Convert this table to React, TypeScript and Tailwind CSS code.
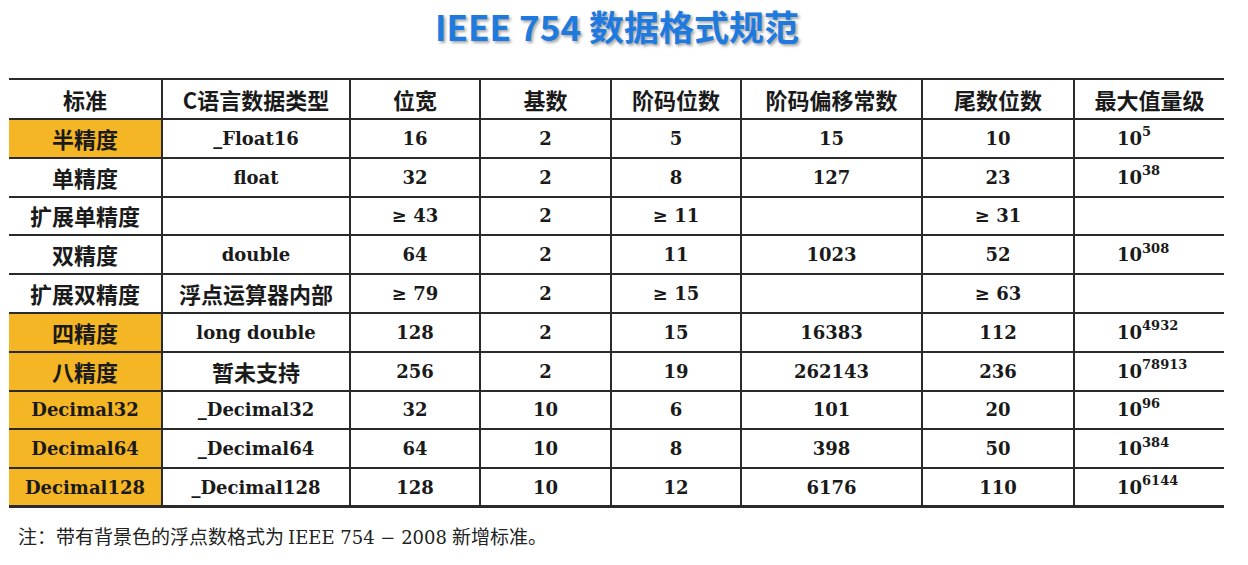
import React from "react";

const CJK = "font-['Noto_Sans_CJK_SC',sans-serif]";
const SERIF = "font-['DejaVu_Serif','Noto_Sans_CJK_SC',serif]";

type Cell = { t: React.ReactNode; cjk?: boolean };

type Row = {
  name: string;
  nameCjk: boolean;
  hl: boolean;
  cells: Cell[];
  maxExp?: string;
};

const rows: Row[] = [
  { name: "半精度", nameCjk: true, hl: true, cells: [{ t: "_Float16" }, { t: "16" }, { t: "2" }, { t: "5" }, { t: "15" }, { t: "10" }], maxExp: "5" },
  { name: "单精度", nameCjk: true, hl: false, cells: [{ t: "float" }, { t: "32" }, { t: "2" }, { t: "8" }, { t: "127" }, { t: "23" }], maxExp: "38" },
  { name: "扩展单精度", nameCjk: true, hl: false, cells: [{ t: "" }, { t: "≥ 43" }, { t: "2" }, { t: "≥ 11" }, { t: "" }, { t: "≥ 31" }] },
  { name: "双精度", nameCjk: true, hl: false, cells: [{ t: "double" }, { t: "64" }, { t: "2" }, { t: "11" }, { t: "1023" }, { t: "52" }], maxExp: "308" },
  { name: "扩展双精度", nameCjk: true, hl: false, cells: [{ t: "浮点运算器内部", cjk: true }, { t: "≥ 79" }, { t: "2" }, { t: "≥ 15" }, { t: "" }, { t: "≥ 63" }] },
  { name: "四精度", nameCjk: true, hl: true, cells: [{ t: "long double" }, { t: "128" }, { t: "2" }, { t: "15" }, { t: "16383" }, { t: "112" }], maxExp: "4932" },
  { name: "八精度", nameCjk: true, hl: true, cells: [{ t: "暂未支持", cjk: true }, { t: "256" }, { t: "2" }, { t: "19" }, { t: "262143" }, { t: "236" }], maxExp: "78913" },
  { name: "Decimal32", nameCjk: false, hl: true, cells: [{ t: "_Decimal32" }, { t: "32" }, { t: "10" }, { t: "6" }, { t: "101" }, { t: "20" }], maxExp: "96" },
  { name: "Decimal64", nameCjk: false, hl: true, cells: [{ t: "_Decimal64" }, { t: "64" }, { t: "10" }, { t: "8" }, { t: "398" }, { t: "50" }], maxExp: "384" },
  { name: "Decimal128", nameCjk: false, hl: true, cells: [{ t: "_Decimal128" }, { t: "128" }, { t: "10" }, { t: "12" }, { t: "6176" }, { t: "110" }], maxExp: "6144" },
];

const headers = ["标准", "C语言数据类型", "位宽", "基数", "阶码位数", "阶码偏移常数", "尾数位数", "最大值量级"];

export default function App() {
  return (
    <div className="w-[1248px] h-[565px] bg-white overflow-hidden text-[#1a1a1a]">
      <div className="h-[52px] flex items-start justify-center pr-[14px]">
        <h1
          className={`${CJK} text-[35px] font-bold text-[#1f7ae0] leading-[52px]`}
          style={{ textShadow: "2px 2px 3px rgba(0,0,0,0.35)" }}
        >
          IEEE 754 数据格式规范
        </h1>
      </div>
      <div className="ml-[9px] mt-[26px] w-[1215px] border-t-2 border-[#2a2a2a]">
        <div className="grid grid-cols-[152px_188px_130px_131px_130px_181px_152px_151px]">
          {headers.map((h, i) => (
            <div
              key={h}
              className={`h-[40px] flex items-center justify-center border-b-2 border-[#2a2a2a] ${i > 0 ? "border-l-2" : ""} ${CJK} font-bold text-[22px]`}
            >
              {h}
            </div>
          ))}
          {rows.map((r, ri) => (
            <React.Fragment key={r.name}>
              <div
                className={`h-[38.8px] flex items-center justify-center border-b-2 border-[#2a2a2a] ${r.hl ? "bg-[#f5b625]" : ""} ${r.nameCjk ? `${CJK} text-[22px]` : `${SERIF} text-[18px]`} font-bold ${ri === rows.length - 1 ? "border-b-[3px]" : ""}`}
              >
                {r.name}
              </div>
              {r.cells.map((c, ci) => (
                <div
                  key={ci}
                  className={`h-[38.8px] flex items-center justify-center border-b-2 border-l-2 border-[#2a2a2a] font-bold ${c.cjk ? `${CJK} text-[22px]` : `${SERIF} text-[18px]`} ${ri === rows.length - 1 ? "border-b-[3px]" : ""}`}
                >
                  {c.t}
                </div>
              ))}
              <div
                className={`h-[38.8px] flex items-center justify-start pl-[42px] border-b-2 border-l-2 border-[#2a2a2a] font-bold ${SERIF} text-[18px] ${ri === rows.length - 1 ? "border-b-[3px]" : ""}`}
              >
                {r.maxExp ? (
                  <span>
                    10<sup className="text-[13px] top-[-0.65em]">{r.maxExp}</sup>
                  </span>
                ) : null}
              </div>
            </React.Fragment>
          ))}
        </div>
      </div>
      <div className="mt-[14px] ml-[18px] text-[19px] text-[#222] flex items-baseline">
        <span className={`${CJK}`}>注：带有背景色的浮点数格式为</span>
        <span className={`${SERIF} ml-[4px] text-[18px]`}>IEEE 754 − 2008</span>
        <span className={`${CJK} ml-[5px]`}>新增标准。</span>
      </div>
    </div>
  );
}
